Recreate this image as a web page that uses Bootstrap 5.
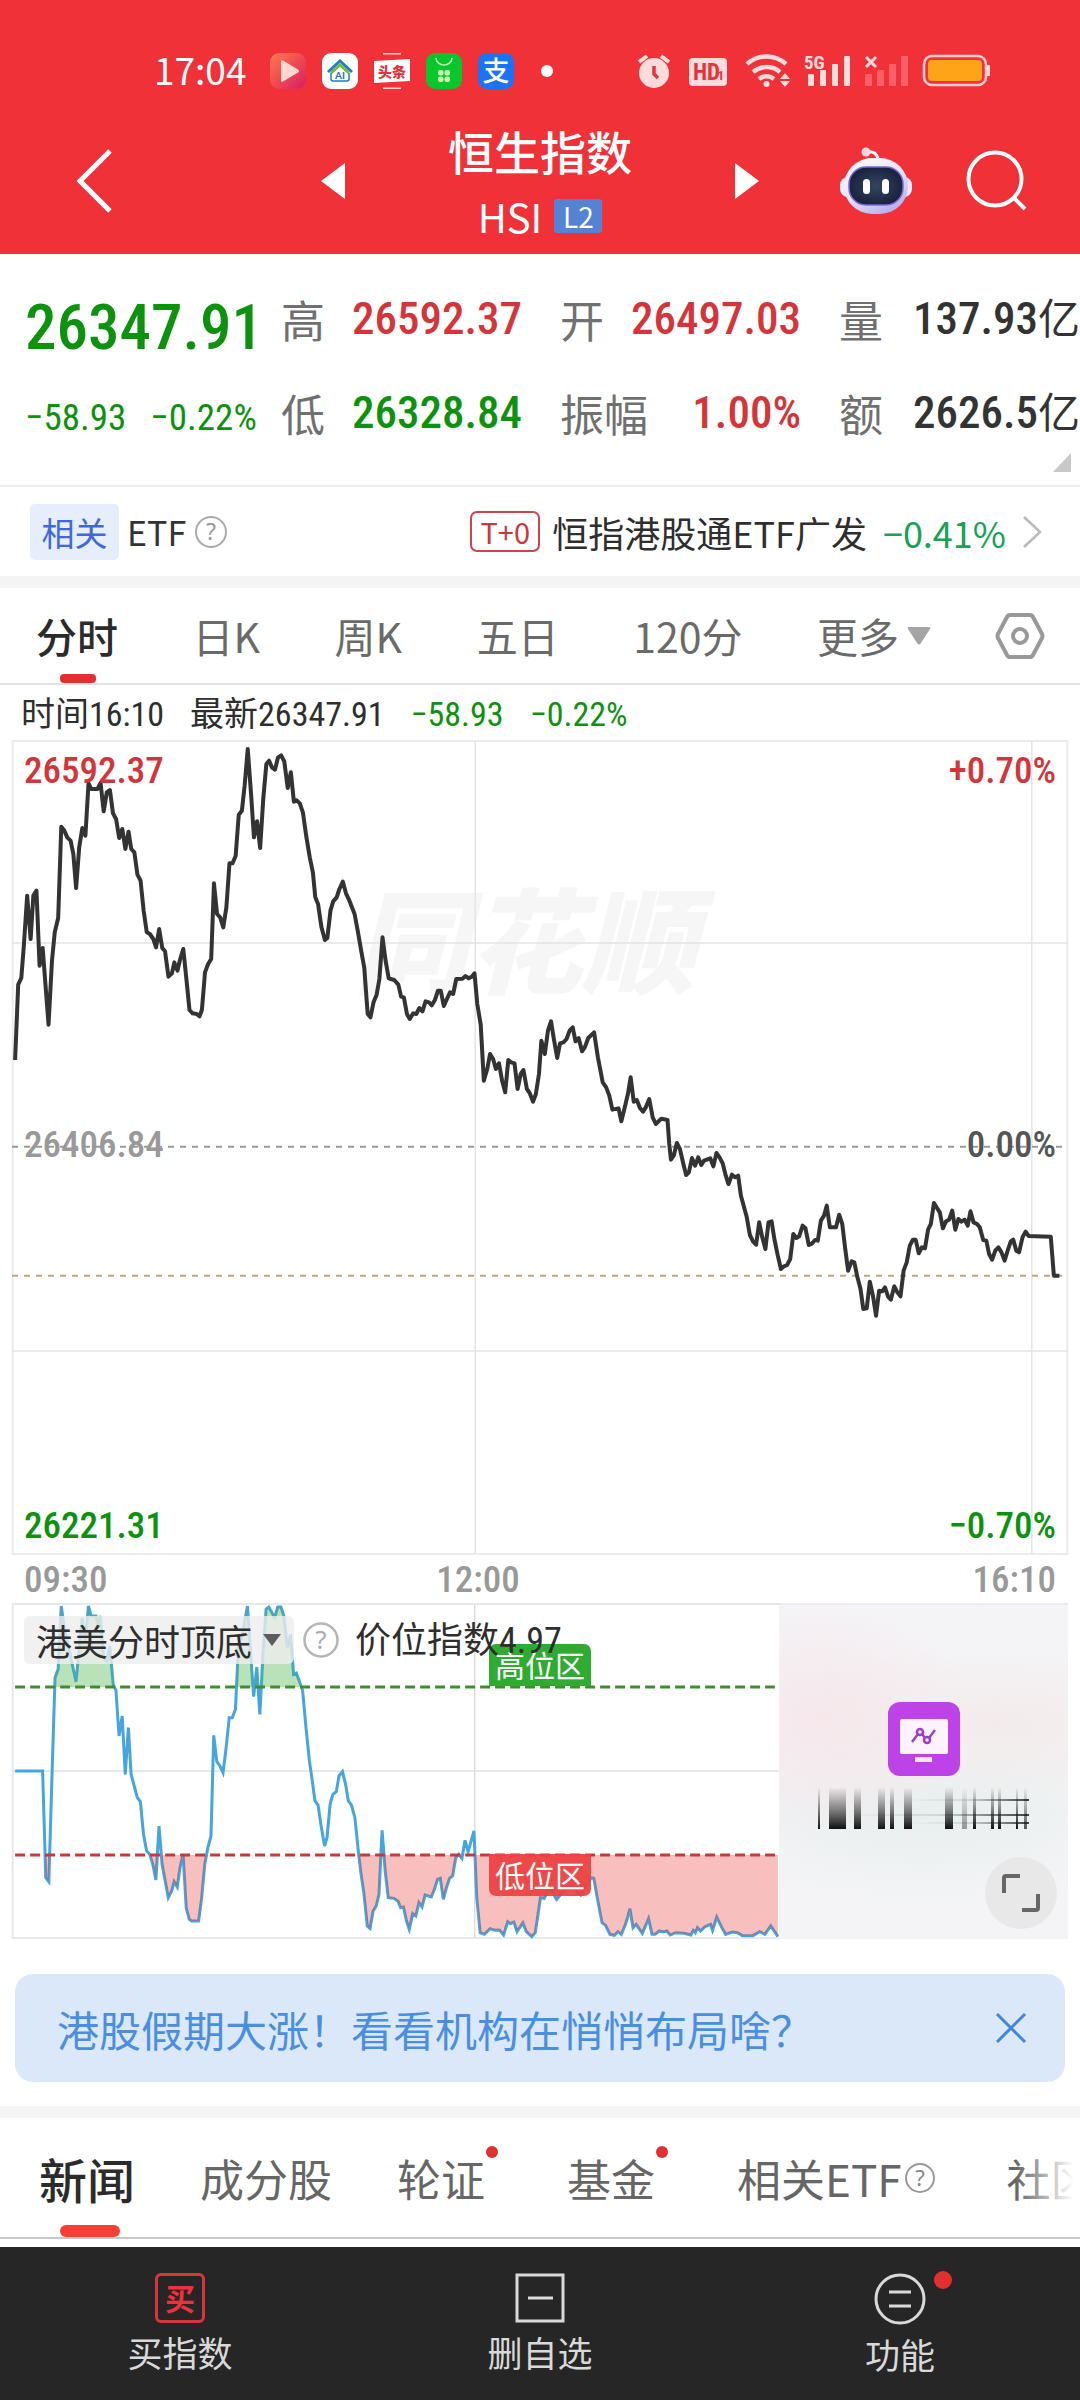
<!DOCTYPE html>
<html lang="zh-CN">
<head>
<meta charset="utf-8">
<meta name="viewport" content="width=device-width, initial-scale=1">
<title>恒生指数 HSI</title>
<link href="https://cdn.jsdelivr.net/npm/bootstrap@5.3.0/dist/css/bootstrap.min.css" rel="stylesheet">
<style>
body{font-family:"Noto Sans CJK SC","Noto Sans",sans-serif;color:#333;background:#fff;overflow-x:hidden}
button,select{font-family:inherit}
.plain{background:none;border:0;padding:0;color:inherit;line-height:inherit}
.din{font-family:"Roboto Condensed","Noto Sans CJK SC",sans-serif}
svg{display:block;flex:none;overflow:visible}
.up{color:#d3353a}.down{color:#0d920d}
/* header */
.topbar{background:#f13138;color:#fff;height:254px}
.status{padding:53px 90px 0 154px;height:89px}
.clock{font-size:37px;line-height:33px;margin-right:24px}
.apps{gap:16px}
.titlebar{display:grid;grid-template-columns:1fr 438px 1fr;align-items:center;height:165px;padding-top:18px}
.idx-name{font-size:46px;line-height:56px;font-weight:500;margin:0}
.idx-code{font-size:40px;line-height:46px;gap:12px;margin-top:15px}
.lv{background:#5583d3;font-size:28px;line-height:34px;width:48px;text-align:center;border-radius:3px}
.actions{gap:54px;padding-right:52px}
/* quote */
.quote{height:233px;padding-left:25px;border-bottom:2px solid #ececec;position:relative}
.quote-main{width:256px;padding-top:36px}
.price{font-size:63px;line-height:76px;font-weight:500}
.change{font-size:37px;line-height:44px;gap:24px;margin-top:30px}
.stats{display:grid;grid-template-columns:repeat(3,1fr);column-gap:38px;row-gap:41px;padding-top:39px;align-content:start;font-size:46px;line-height:52px;flex:1;min-width:0}
.stats div{display:flex;justify-content:space-between;white-space:nowrap}
.stats dt{font-family:"Noto Sans CJK SC";font-weight:400;font-size:44px;color:#707070}
.stats dd{margin:0;font-weight:500}
.stats dd{font-size:45px}
.stats small{font-size:42px;font-weight:400}
.stats,.stats dt{margin:0}
.corner{position:absolute;right:9px;bottom:13px}
/* etf */
.etf{height:89px;padding:0 38px 0 30px;font-size:36px}
.tagblue{background:#e6edfb;color:#4069d8;font-size:33px;line-height:56px;width:89px;text-align:center;border-radius:5px}
.t0{border:2px solid #d0434b;border-radius:7px;color:#d0343c;font-size:29px;line-height:37px;width:70px;text-align:center}
.band{height:12px;background:#f4f4f4}
/* tabs */
.period{height:97px;padding:0 36px;border-bottom:2px solid #e2e2e2;font-size:41px;color:#6a6a6a}
.period a,.news a{color:inherit;text-decoration:none;white-space:nowrap;position:relative;display:flex;align-items:center}
.period a{height:95px}
.period .on{color:#2b2b2b;font-weight:500}
.period .on::after{content:"";position:absolute;left:24px;width:36px;bottom:0;height:9px;border-radius:4px;background:#e0312f}
.info{font-size:34px;line-height:55px;height:55px;padding:2px 0 0 21px;color:#2e2e2e;gap:26px}
/* charts */
.chartbox{margin:0 12px;position:relative;height:815px}
.chartbox>svg,.sub svg.plot{width:100%;height:100%}
.wm{position:absolute;left:342px;top:116px;font-size:114px;line-height:160px;font-weight:900;font-style:italic;color:#f6f6f6;z-index:-1}
.ylab{position:absolute;inset:8px 12px 6px 12px;font-size:37px;line-height:46px;font-weight:500}
.ymid{padding-bottom:8px;color:#999}
.xlab{height:48px;padding:0 24px;font-size:37px;line-height:49px;color:#999;font-weight:500}
.noon{margin-right:124px}
.sub{margin:0 12px;height:336px;position:relative}
.sub-left{width:767px;flex:0 1 767px;position:relative}
.sub-right{flex:1;border-top:2px solid #ebebeb;background:radial-gradient(ellipse 150px 120px at 15% 34%,#f6e7eb 0,rgba(246,231,235,0) 100%),radial-gradient(ellipse 240px 80px at 75% 36%,#f3ebeb 0,rgba(243,235,235,0) 100%),radial-gradient(ellipse 240px 90px at 50% 62%,#e8eeee 0,rgba(232,238,238,0) 100%),#f4f4f6;position:relative}
.overlay{position:absolute;left:12px;top:11px;gap:9px}
.picker{background:rgba(238,238,238,.8);border-radius:6px;height:48px;padding:0 13px 0 12px;gap:11px}
.picker select{appearance:none;border:0;background:none;padding:0;font-size:36px;line-height:48px;color:#2e2e2e;width:216px;outline:0}
.ival{font-size:36px;line-height:48px;color:#2e2e2e;font-family:"Roboto Condensed","Noto Sans CJK SC";margin-left:7px;padding-top:3px;position:relative;z-index:1}
.zone{position:absolute;left:477px;width:102px;height:42px;line-height:40px;font-size:30px;color:#fff;text-align:center}
.zone-hi{top:41px;background:#2fab31;border-radius:7px 7px 0 0}
.zone-lo{top:251px;background:rgba(237,66,66,.94);border-radius:0 0 7px 7px}
.expand{position:absolute;right:11px;bottom:10px;width:72px;height:72px;border-radius:50%;background:#e8e8e9;display:flex;align-items:center;justify-content:center}
/* tip */
.tip{margin:35px 15px 24px;height:108px;border-radius:18px;background:#dae8fa;color:#4a8edf;font-size:42px;padding:0 38px 0 42px}
.tip a{color:inherit;text-decoration:none}
/* news tabs */
.news{height:121px;border-bottom:2px solid #c9c9c9;padding-left:39px;gap:65px;font-size:44px;color:#666;overflow:hidden;position:relative}
.news a{height:119px}
.news .on{font-size:48px;font-weight:500;color:#2b2b2b}
.news .on::after{content:"";position:absolute;left:21px;width:60px;bottom:0;height:12px;border-radius:6px;background:#f93f35}
.news .dot{padding-right:17px}
.news .dot::after{content:"";position:absolute;right:4px;top:28px;width:12px;height:12px;border-radius:50%;background:#e2302f}
.fade-out{position:absolute;right:0;top:0;width:64px;height:110px;background:linear-gradient(90deg,rgba(255,255,255,0),#fff 90%)}
.bottombar{background:#262626;color:#d9d9d9;height:153px;margin-top:8px;font-size:35px;line-height:44px}
.bottombar button{flex:1;display:flex;flex-direction:column;align-items:center;gap:7px;padding-top:26px}
.ic{position:relative}
.ic i{position:absolute;right:-26px;top:-2px;width:18px;height:18px;border-radius:50%;background:#e2302f}
.buy{width:50px;height:50px;border:3px solid #d8363c;border-radius:6px;color:#f0303c;font-size:30px;line-height:42px;font-weight:700;text-align:center}
</style>
<script src="https://cdn.jsdelivr.net/npm/bootstrap@5.3.0/dist/js/bootstrap.bundle.min.js"></script>
</head>
<body>
<header class="topbar">
  <div class="status d-flex align-items-start">
    <span class="clock">17:04</span>
    <div class="apps d-flex align-items-center">
      <svg width="36" height="36" viewBox="0 0 36 36"><defs><linearGradient id="pl" x2="1" y2="1"><stop offset="0" stop-color="#ff7a52"/><stop offset=".5" stop-color="#f04a50"/><stop offset="1" stop-color="#d31f68"/></linearGradient></defs><rect width="36" height="36" rx="9" fill="url(#pl)"/><path d="M11 8.500q0-2 2-1l15 9q2 1.500 0 3l-15 9q-2 1-2-1z" fill="#ffd9cf"/></svg>
      <svg width="36" height="36" viewBox="0 0 36 36"><rect width="36" height="36" rx="9" fill="#fff"/><path d="M6 19 18 8l12 11" fill="none" stroke="#1f7fc0" stroke-width="3"/><path d="M9 20 18 12l9 8" fill="none" stroke="#7cb83e" stroke-width="3"/><path d="M9 20v6q0 2 2 2h14q2 0 2-2v-6" fill="none" stroke="#1f7fc0" stroke-width="1.500"/><text x="18" y="26" font-size="10" font-weight="700" font-family="Lato" text-anchor="middle" fill="#1b6fb8">AI</text></svg>
      <svg width="36" height="36" viewBox="0 0 36 36"><path d="M9 .700h18M9 35.300h18" stroke="#ffd0d0" stroke-width="1.400"/><path d="M0 8l36-2v22L0 30z" fill="#fff"/><text x="18" y="23.500" font-size="14" font-weight="900" font-family="Noto Sans CJK SC" text-anchor="middle" fill="#e3323b">头条</text></svg>
      <svg width="36" height="36" viewBox="0 0 36 36"><rect width="36" height="36" rx="9" fill="#08c62c"/><path d="M10 5a8 7 0 0 0 16 0" fill="none" stroke="#b9f5b5" stroke-width="1.600"/><g fill="#c9f5b0"><rect x="12" y="17" width="5.500" height="5.500" rx="2"/><rect x="18.500" y="17" width="5.500" height="5.500" rx="2"/><rect x="12" y="23.500" width="5.500" height="5.500" rx="2"/><rect x="18.500" y="23.500" width="5.500" height="5.500" rx="2"/></g></svg>
      <svg width="36" height="36" viewBox="0 0 36 36"><rect width="36" height="36" rx="9" fill="#1b74f7"/><text x="18" y="28" font-size="27" font-weight="500" font-family="Noto Sans CJK SC" text-anchor="middle" fill="#fff">支</text></svg>
      <svg width="12" height="12" viewBox="0 0 12 12" class="ms-2"><circle cx="9" cy="6" r="6" fill="#fff"/></svg>
    </div>
    <div class="d-flex ms-auto">
      <svg width="352" height="36" viewBox="637 53 352 36" fill="#ffdcdc">
        <circle cx="653" cy="73" r="15"/><path d="M638 62l8-6M668 62l-8-6" stroke="#ffdcdc" stroke-width="4"/><path d="M653 66v8l4 4" fill="none" stroke="#e8323a" stroke-width="3.500"/>
        <rect x="688" y="58" width="38" height="28" rx="4"/><text x="692" y="80" font-family="Roboto Condensed" font-weight="700" font-size="23" fill="#e8323a">HD</text><text x="716" y="80" font-family="Roboto" font-weight="700" font-size="13" fill="#e8323a">1</text>
        <g fill="none" stroke="#ffdcdc" stroke-width="4.500"><path d="M746 64a29 29 0 0 1 39 0"/><path d="M752 72a21 21 0 0 1 27 0"/><path d="M758 79a12 12 0 0 1 15 0"/></g><circle cx="765.500" cy="84" r="3"/><path d="M779 79l5-6 5 6zM779 81l5 6 5-6z"/>
        <text x="803" y="69" font-family="Roboto Condensed" font-weight="700" font-size="19">5G</text><rect x="807" y="74" width="6" height="12" rx="1"/><rect x="819" y="70" width="6" height="16" rx="1"/><rect x="831" y="64" width="6" height="22" rx="1"/><rect x="843" y="56" width="6" height="30" rx="1"/>
        <path d="M865 57l10 10M875 57l-10 10" stroke="#ffdcdc" stroke-width="3"/><g fill="#fa6066"><rect x="864" y="74" width="7" height="12" rx="1"/><rect x="876" y="70" width="7" height="16" rx="1"/><rect x="888" y="64" width="7" height="22" rx="1"/><rect x="900" y="56" width="7" height="30" rx="1"/></g>
        <rect x="923" y="56" width="62" height="29" rx="8" fill="none" stroke="#ffcfd0" stroke-width="2.500"/><rect x="927" y="60" width="54" height="21" rx="4" fill="#ffa319"/><rect x="986" y="65" width="3" height="11" rx="1"/>
      </svg>
    </div>
  </div>
  <div class="titlebar">
    <button class="plain text-start" style="padding-left:77px" aria-label="返回"><svg width="36" height="64" viewBox="0 0 36 64"><path d="M33 2 3 32l30 30" fill="none" stroke="#fff" stroke-width="5"/></svg></button>
    <div class="d-flex justify-content-between align-items-center">
      <button class="plain" aria-label="上一个"><svg width="24" height="36" viewBox="0 0 24 36"><path d="M24 0v36L0 18z" fill="#fff"/></svg></button>
      <div class="text-center"><h1 class="idx-name">恒生指数</h1><div class="idx-code d-flex justify-content-center align-items-center"><span>HSI</span><span class="lv">L2</span></div></div>
      <button class="plain" aria-label="下一个"><svg width="24" height="36" viewBox="0 0 24 36"><path d="M0 0v36l24-18z" fill="#fff"/></svg></button>
    </div>
    <div class="actions d-flex justify-content-end align-items-center">
      <button class="plain" aria-label="助手"><svg width="72" height="68" viewBox="0 0 72 68"><defs><linearGradient id="rb" x2=".6" y2="1"><stop offset="0" stop-color="#fff"/><stop offset=".6" stop-color="#e6e2fb"/><stop offset="1" stop-color="#b9b2ee"/></linearGradient><radialGradient id="rf"><stop offset="0" stop-color="#33465f"/><stop offset="1" stop-color="#1a2340"/></radialGradient></defs><path d="M26 5q11-2 12 8" fill="none" stroke="#fff" stroke-width="3"/><circle cx="26" cy="5" r="4.500" fill="#ffd5e0"/><rect y="30" width="72" height="20" rx="8" fill="#eee9fb"/><rect x="4" y="11" width="64" height="56" rx="28" fill="url(#rb)"/><rect x="9" y="20" width="54" height="38" rx="17" fill="url(#rf)" stroke="#7a68d8" stroke-width="1.500"/><rect x="23" y="32" width="7" height="15" rx="3.500" fill="#fff"/><rect x="42" y="32" width="7" height="15" rx="3.500" fill="#fff"/></svg></button>
      <button class="plain" aria-label="搜索"><svg width="62" height="62" viewBox="0 0 62 62"><circle cx="29" cy="29" r="26.500" fill="none" stroke="#fff" stroke-width="4"/><path d="M47 47l12 12" stroke="#fff" stroke-width="4"/></svg></button>
    </div>
  </div>
</header>

<section class="quote d-flex">
  <div class="quote-main din down">
    <div class="price">26347.91</div>
    <div class="change d-flex text-nowrap"><span>−58.93</span><span>−0.22%</span></div>
  </div>
  <dl class="stats din">
    <div><dt>高</dt><dd class="up">26592.37</dd></div>
    <div><dt>开</dt><dd class="up">26497.03</dd></div>
    <div><dt>量</dt><dd>137.93<small>亿</small></dd></div>
    <div><dt>低</dt><dd class="down">26328.84</dd></div>
    <div><dt>振幅</dt><dd class="up">1.00%</dd></div>
    <div><dt>额</dt><dd>2626.5<small>亿</small></dd></div>
  </dl>
  <svg class="corner" width="18" height="19" viewBox="0 0 18 19"><path d="M18 0v19H0z" fill="#c9c9c9"/></svg>
</section>

<section class="etf d-flex align-items-center text-nowrap">
  <span class="tagblue">相关</span>
  <span class="ms-2" style="font-size:34px">ETF</span>
  <svg class="ms-2" width="34" height="34" viewBox="0 0 34 34"><circle cx="17" cy="17" r="15" fill="none" stroke="#aaa" stroke-width="2"/><text x="17" y="25" font-size="23" font-family="Noto Sans" text-anchor="middle" fill="#999">?</text></svg>
  <span class="t0 ms-auto">T+0</span>
  <a href="#" class="text-decoration-none ms-2 ps-1" style="color:#2e2e2e">恒指港股通ETF广发</a>
  <span class="ms-3" style="color:#17a255">−0.41%</span>
  <svg class="ms-3" width="20" height="34" viewBox="0 0 20 34"><path d="M2 2l16 15L2 32" fill="none" stroke="#b9b9b9" stroke-width="2.500"/></svg>
</section>
<div class="band"></div>

<nav class="period d-flex align-items-center">
  <div class="d-flex flex-grow-1 justify-content-between" style="margin-right:65px">
    <a href="#" class="on">分时</a><a href="#">日K</a><a href="#">周K</a><a href="#">五日</a><a href="#">120分</a>
    <a href="#">更多<svg class="ms-2" width="24" height="19" viewBox="0 0 24 19"><path d="M2 1h20q2 0 1 2L14 17q-2 3-4 0L1 3Q0 1 2 1z" fill="#a5a5a5"/></svg></a>
  </div>
  <button class="plain" aria-label="设置"><svg width="48" height="48" viewBox="0 0 48 48" fill="none" stroke="#999" stroke-width="4"><path d="M14 3h20q2 0 3 2l9 17q1 2 0 4l-9 17q-1 2-3 2H14q-2 0-3-2L2 26q-1-2 0-4l9-17q1-2 3-2z"/><circle cx="24" cy="24" r="7"/></svg></button>
</nav>

<div class="info din d-flex text-nowrap"><span>时间16:10</span><span>最新26347.91</span><span class="down">−58.93</span><span class="down">−0.22%</span></div>

<div class="chartbox">
  <div class="wm">同花顺</div>
  <svg id="main" viewBox="36 28 3064 2445" preserveAspectRatio="none" fill="none">
    <g stroke="#e4e4e4" stroke-width="2"><path vector-effect="non-scaling-stroke" d="M38 31H3098V2470H38z" stroke="#ebebeb"/><path vector-effect="non-scaling-stroke" d="M36 637H3100M36 1861H3100M1380 30V2470M2995 30V2470" stroke-width="1.500"/></g>
    <path vector-effect="non-scaling-stroke" d="M36 1248H3085" stroke="#999" stroke-width="2" stroke-dasharray="6 6"/>
    <path vector-effect="non-scaling-stroke" d="M36 1635H3085" stroke="#bfa878" stroke-width="2" stroke-dasharray="6 6"/>
    <polyline id="price" vector-effect="non-scaling-stroke" stroke="#333" stroke-width="4" stroke-linejoin="round"/>
  </svg>
  <div class="ylab din d-flex flex-column justify-content-between">
    <div class="d-flex justify-content-between up"><span>26592.37</span><span>+0.70%</span></div>
    <div class="ymid d-flex justify-content-between"><span>26406.84</span><span style="color:#555">0.00%</span></div>
    <div class="d-flex justify-content-between down"><span>26221.31</span><span>−0.70%</span></div>
  </div>
</div>
<div class="xlab din d-flex justify-content-between"><span>09:30</span><span class="noon">12:00</span><span>16:10</span></div>

<div class="sub d-flex">
  <div class="sub-left">
    <svg class="plot" viewBox="36 36 2228 1008" preserveAspectRatio="none" fill="none">
      <defs><clipPath id="hi"><path d="M0 0H2300V288H0z"/></clipPath><clipPath id="lo"><path d="M0 792H2300V1100H0z"/></clipPath></defs>
      <g stroke="#e8e8e8" stroke-width="2"><path vector-effect="non-scaling-stroke" d="M2264 39H38V1041H2264M38 540H2264"/><path vector-effect="non-scaling-stroke" d="M1380 39V1041" stroke-width="1.500" stroke="#dcdcdc"/></g>
      <polyline id="sl" vector-effect="non-scaling-stroke" stroke="#45a5de" stroke-width="3"/>
      <polygon id="ah" clip-path="url(#hi)" fill="rgba(70,180,70,.38)"/>
      <polygon id="al" clip-path="url(#lo)" fill="rgba(235,60,60,.33)"/>
      <path vector-effect="non-scaling-stroke" d="M45 288H2252" stroke="#3e8e2c" stroke-width="3" stroke-dasharray="10 5"/>
      <path vector-effect="non-scaling-stroke" d="M45 792H2264" stroke="#c8383c" stroke-width="3" stroke-dasharray="10 5"/>
    </svg>
    <span class="zone zone-hi">高位区</span><span class="zone zone-lo">低位区</span>
    <div class="overlay d-flex align-items-center text-nowrap">
      <label class="picker d-flex align-items-center"><select aria-label="指标"><option>港美分时顶底</option></select><svg width="18" height="12" viewBox="0 0 18 12"><path d="M0 0h18L9 12z" fill="#5c5c5c"/></svg></label>
      <svg width="36" height="36" viewBox="0 0 36 36"><circle cx="18" cy="18" r="16.500" fill="none" stroke="#b5b5b5" stroke-width="2.500"/><text x="18" y="27" font-size="26" font-family="Noto Sans" text-anchor="middle" fill="#aaa">?</text></svg>
      <span class="ival">价位指数4.97</span>
    </div>
  </div>
  <div class="sub-right">
    <svg class="mx-auto" style="margin-top:97px" width="72" height="74" viewBox="0 0 72 74"><rect width="72" height="74" rx="12" fill="#bd43e8"/><rect x="12" y="17" width="48" height="35" rx="2" fill="#fdf3ff"/><rect x="27" y="55" width="17" height="5" fill="#fbe4ff"/><g fill="none" stroke="#a23cc8" stroke-width="2.500"><path d="M24 40l6-8M34 32l3 4M41 36l6-8"/><circle cx="32" cy="30" r="3"/><circle cx="39" cy="38" r="3"/></g></svg>
    <svg class="mx-auto" style="margin-top:11px" width="214" height="43" viewBox="0 0 214 43"><defs><linearGradient id="bc" x2="0" y2="1"><stop offset="0" stop-color="#222" stop-opacity="0"/><stop offset=".5" stop-color="#222" stop-opacity=".5"/><stop offset="1" stop-color="#111"/></linearGradient><linearGradient id="bh"><stop offset="0" stop-color="#222" stop-opacity="0"/><stop offset=".5" stop-color="#222" stop-opacity=".12"/><stop offset="1" stop-color="#111" stop-opacity=".8"/></linearGradient></defs>
      <g fill="url(#bc)"><rect x="1" width="2" height="42"/><rect x="12" width="17" height="42"/><rect x="37" width="7" height="42"/><rect x="61" width="7" height="42"/><rect x="73" width="4" height="42"/><rect x="87" width="8" height="42"/><rect x="128" width="8" height="42"/><rect x="145" width="5" height="42" opacity=".4"/><rect x="156" width="3" height="42"/><rect x="174" width="3" height="42"/><rect x="181" width="3" height="42"/><rect x="199" width="2" height="42"/><rect x="207" width="3" height="42" opacity=".7"/></g>
      <g fill="url(#bh)"><rect x="90" y="12" width="122" height="2"/><rect x="30" y="27" width="182" height="2"/><rect x="90" y="35" width="122" height="2"/></g></svg>
    <button class="plain expand" aria-label="全屏"><svg width="38" height="38" viewBox="0 0 38 38" fill="none" stroke="#666" stroke-width="4"><path d="M2 19V4q0-2 2-2h14M20 36h14q2 0 2-2V20"/></svg></button>
  </div>
</div>

<div class="tip d-flex align-items-center justify-content-between text-nowrap">
  <a href="#">港股假期大涨！看看机构在悄悄布局啥？</a>
  <button class="plain" aria-label="关闭"><svg width="32" height="32" viewBox="0 0 32 32"><path d="M2 2l28 28M30 2L2 30" stroke="#3f86dc" stroke-width="3"/></svg></button>
</div>
<div class="band"></div>
<nav class="news d-flex">
  <a href="#" class="on">新闻</a><a href="#">成分股</a><a href="#" class="dot">轮证</a><a href="#" class="dot">基金</a>
  <a href="#" class="pe-2">相关ETF<svg width="32" height="32" viewBox="0 0 32 32"><circle cx="18" cy="16" r="14" fill="none" stroke="#999" stroke-width="2"/><text x="18" y="24" font-size="22" font-family="Noto Sans" text-anchor="middle" fill="#888">?</text></svg></a>
  <a href="#">社区</a><span class="fade-out"></span>
</nav>
<footer class="bottombar d-flex">
  <button class="plain"><span class="buy">买</span><span>买指数</span></button>
  <button class="plain"><svg width="50" height="50" viewBox="0 0 50 50" fill="none" stroke="#d9d9d9" stroke-width="3"><path d="M2 2h46v46H2zM13 25h25"/></svg><span>删自选</span></button>
  <button class="plain"><span class="ic"><svg width="52" height="52" viewBox="0 0 52 52" fill="none" stroke="#d9d9d9" stroke-width="3"><circle cx="26" cy="26" r="24"/><path d="M15 19h22M15 33h22"/></svg><i></i></span><span>功能</span></button>
</footer>

<script>
// each session is stored as x,y pairs; the afternoon one starts at x = 1568
const parse=(s,dx)=>s.trim().split(/\s+/).map(p=>{const[a,b]=p.split(',').map(Number);return(a+dx)+','+b;});
const m1=`45,988 54,762 63,742 70,650 80,495 90,625 98,495 107,480 116,705 125,652 142,882 152,690 160,605 170,562 179,288 188,300 196,320 206,330 214,370 222,472 231,350 240,292 249,315 258,158 266,175 284,175 293,157 302,242 311,185 320,178 329,248 338,265 347,322 356,295 365,355 374,303 382,355 391,365 400,432 409,450 418,540 427,605 436,610 446,625 454,650 463,595 472,652 480,662 490,738 500,728 507,695 516,720 524,685 533,655 542,745 551,838 560,848 572,850 580,857 587,838 596,725 605,700 614,685 622,458 631,550 640,560 649,590 658,530 667,398 676,398 685,375 694,252 703,240 711,165 720,55 730,195 738,320 747,272 756,352 765,205 774,100 782,90 790,110 799,117 808,80 817,74 826,92 836,172 845,125 854,213 862,209 871,218 880,245 890,318 900,380 909,425 916,500 924,520 934,590 944,628 951,622 960,540 968,512 978,500 986,475 996,453 1005,488 1015,510 1030,550 1040,605 1050,665 1058,710 1068,850 1076,860 1085,815 1094,792 1102,745 1111,620 1120,690 1129,743 1145,748 1157,762 1165,798 1173,800 1182,850 1190,865 1200,848 1209,850 1218,832 1227,842 1236,812 1246,815 1254,824 1263,808 1272,780 1280,780 1289,826 1298,805 1307,785 1316,790 1325,745 1343,744 1352,736 1361,743 1370,738 1378,728 1386,820 1396,882 1405,1050 1415,1015 1423,970 1432,985 1440,1015 1449,998 1458,1050 1467,1085 1476,988 1484,995 1494,998 1503,1075 1512,1030 1520,1018 1530,1075 1538,1087 1548,1113 1556,1090 1565,1030`;
const m2=`4,930 14,970 23,900 32,872 41,930 50,982 58,938 68,935 77,925 86,900 95,890 103,932 112,922 122,962 130,950 140,922 150,912 157,905 168,980 182,1055 192,1070 201,1095 210,1137 228,1133 236,1172 246,1130 255,1090 263,1040 272,1113 281,1108 290,1132 299,1143 307,1130 317,1105 327,1160 336,1180 352,1164 370,1168 375,1240 380,1287 388,1275 397,1237 406,1255 416,1300 424,1333 432,1325 441,1282 450,1305 459,1280 468,1303 476,1290 494,1283 503,1307 512,1267 521,1280 530,1298 539,1335 547,1360 557,1332 566,1340 575,1335 583,1395 600,1460 609,1513 618,1532 627,1542 636,1475 645,1520 654,1555 663,1475 672,1472 680,1525 690,1575 699,1615 708,1607 717,1603 726,1585 735,1510 744,1522 752,1517 762,1485 770,1492 780,1543 790,1538 798,1528 806,1530 815,1470 824,1455 832,1425 841,1490 859,1490 868,1452 877,1480 885,1550 894,1620 904,1592 912,1595 921,1640 930,1675 938,1735 948,1733 957,1653 966,1695 975,1755 984,1680 993,1682 1001,1670 1010,1698 1018,1707 1028,1667 1037,1685 1046,1697 1055,1620 1064,1595 1073,1545 1082,1527 1090,1527 1099,1568 1108,1550 1117,1553 1126,1497 1134,1480 1143,1417 1152,1432 1160,1445 1169,1493 1178,1472 1187,1467 1196,1440 1205,1497 1214,1465 1223,1473 1232,1467 1241,1485 1249,1442 1258,1475 1268,1480 1276,1490 1286,1528 1295,1530 1303,1570 1312,1587 1321,1560 1330,1550 1339,1565 1348,1590 1357,1560 1366,1532 1373,1527 1382,1560 1390,1565 1400,1520 1409,1503 1418,1516 1482,1518 1491,1635 1507,1635`;
const s1=`45,540 125,540 134,860 143,872 152,560 161,260 170,235 179,45 188,110 222,272 240,80 249,150 258,45 266,75 280,75 285,95 293,75 302,200 311,210 320,165 330,280 338,298 347,435 356,375 365,550 374,410 382,550 391,585 400,620 409,632 418,730 427,780 436,790 445,820 454,867 463,705 472,820 481,870 490,920 500,900 507,872 516,888 524,830 533,790 542,950 551,985 558,990 578,990 587,920 596,820 605,770 614,735 622,433 631,512 640,525 649,545 658,470 667,380 676,380 685,355 694,160 703,140 720,45 730,200 738,317 747,228 756,370 765,190 774,55 782,48 799,80 808,48 817,48 826,75 836,170 845,130 854,250 862,246 880,297 890,410 900,510 907,560 916,630 925,642 934,705 944,765 951,740 960,640 968,610 978,602 986,555 996,542 1005,580 1013,630 1022,642 1032,680 1043,790 1050,850 1058,905 1068,1005 1076,1012 1085,960 1094,945 1102,910 1111,718 1120,840 1129,920 1145,922 1157,930 1165,950 1173,948 1182,990 1190,1015 1200,968 1209,975 1218,935 1227,948 1236,912 1254,918 1263,895 1272,865 1280,862 1289,925 1298,890 1307,862 1316,855 1325,800 1334,790 1343,802 1352,748 1361,782 1378,720 1386,920 1396,1025 1408,1030 1425,1013 1440,1018 1452,1017 1464,1032 1476,992 1484,998 1494,993 1503,1022 1520,996 1530,1022 1546,1037 1556,1025 1564,970`;
const s2=`3,920 14,922 30,890 50,925 70,900 95,885 120,912 140,880 150,860 158,862 168,920 182,995 192,1003 205,1030 218,1033 228,1022 238,1030 250,1000 256,980 263,953 272,1010 281,1000 299,1027 317,983 327,1030 336,1030 348,1020 360,1023 370,1020 380,1032 395,1025 420,1027 440,1032 447,1018 453,1025 459,1010 468,1020 480,1008 497,1000 503,1018 515,978 530,1010 541,1030 560,1023 575,1025 590,1034 620,1034 640,1022 655,1030 672,1005 693,1037`;
const set=(id,p)=>document.getElementById(id).setAttribute('points',p.join(' '));
set('price',[...parse(m1,0),...parse(m2,1568)]);
const s=[...parse(s1,0),...parse(s2,1568)];
set('sl',s);
set('ah',['45,288',...s,'2261,288']);
set('al',['45,792',...s,'2261,792']);
</script>
</body>
</html>
